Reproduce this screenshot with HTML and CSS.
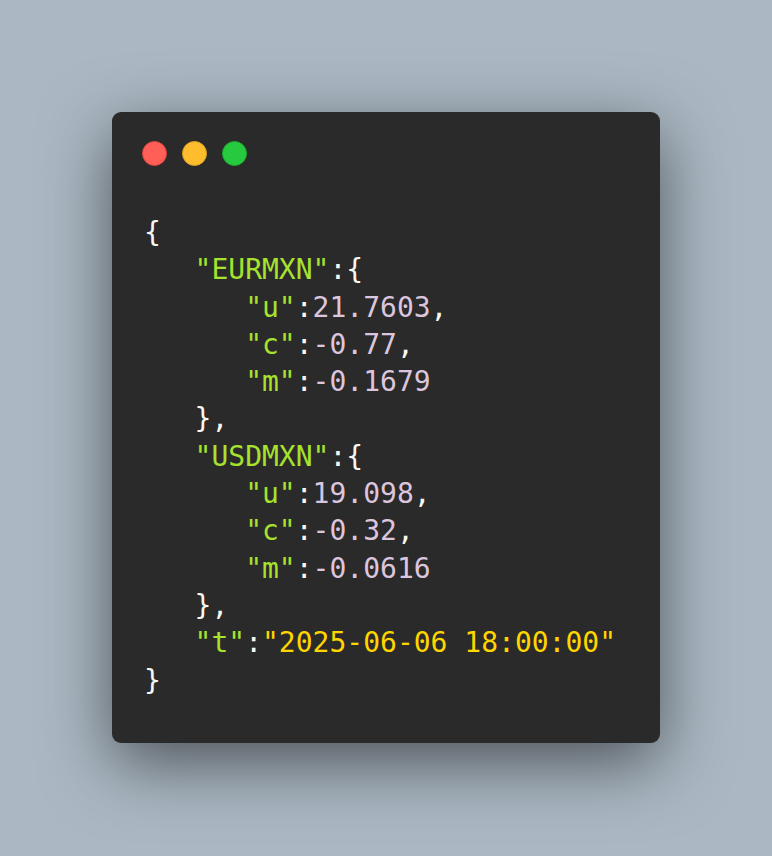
FILE: index.html
```html
<!DOCTYPE html>
<html>
<head>
<meta charset="utf-8">
<link rel="stylesheet" href="styles.css">
</head>
<body>
<div class="stage">
  <div class="window">
    <div class="controls">
      <span class="dot red"></span>
      <span class="dot yellow"></span>
      <span class="dot green"></span>
    </div>
<pre class="code"><span class="p">{</span>
   <span class="k">"EURMXN"</span><span class="p">:{</span>
      <span class="k">"u"</span><span class="p">:</span><span class="n">21.7603</span><span class="p">,</span>
      <span class="k">"c"</span><span class="p">:</span><span class="n">-0.77</span><span class="p">,</span>
      <span class="k">"m"</span><span class="p">:</span><span class="n">-0.1679</span>
   <span class="p">},</span>
   <span class="k">"USDMXN"</span><span class="p">:{</span>
      <span class="k">"u"</span><span class="p">:</span><span class="n">19.098</span><span class="p">,</span>
      <span class="k">"c"</span><span class="p">:</span><span class="n">-0.32</span><span class="p">,</span>
      <span class="k">"m"</span><span class="p">:</span><span class="n">-0.0616</span>
   <span class="p">},</span>
   <span class="k">"t"</span><span class="p">:</span><span class="s">"2025-06-06 18:00:00"</span>
<span class="p">}</span></pre>
  </div>
</div>
</body>
</html>
```
FILE: styles.css
```css
html, body {
  margin: 0;
  padding: 0;
}
body {
  background: #abb8c3;
  width: 772px;
  height: 856px;
  overflow: hidden;
}
.stage {
  padding: 112px;
  display: flex;
  justify-content: center;
}
.window {
  width: 548px;
  height: 631px;
  box-sizing: border-box;
  background: #2a2a2a;
  border-radius: 9px;
  box-shadow: 0 20px 68px rgba(0, 0, 0, 0.55);
  padding: 29px 32px 0 30px;
}
.controls {
  display: flex;
  gap: 15px;
  height: 25px;
}
.dot {
  width: 25px;
  height: 25px;
  border-radius: 50%;
  box-sizing: border-box;
}
.red { background: #ff5f56; border: 1px solid #e0443e; }
.yellow { background: #ffbd2e; border: 1px solid #dea123; }
.green { background: #27c93f; border: 1px solid #1aab29; }
.code {
  margin: 48px 0 0 2px;
  font-family: "DejaVu Sans Mono", monospace;
  font-size: 28px;
  line-height: 37.3px;
  color: #f8f8f2;
  white-space: pre;
}
.p { color: #f8f8f2; }
.k { color: #a6e22e; }
.n { color: #dcc6de; }
.s { color: #ffd500; }
```
